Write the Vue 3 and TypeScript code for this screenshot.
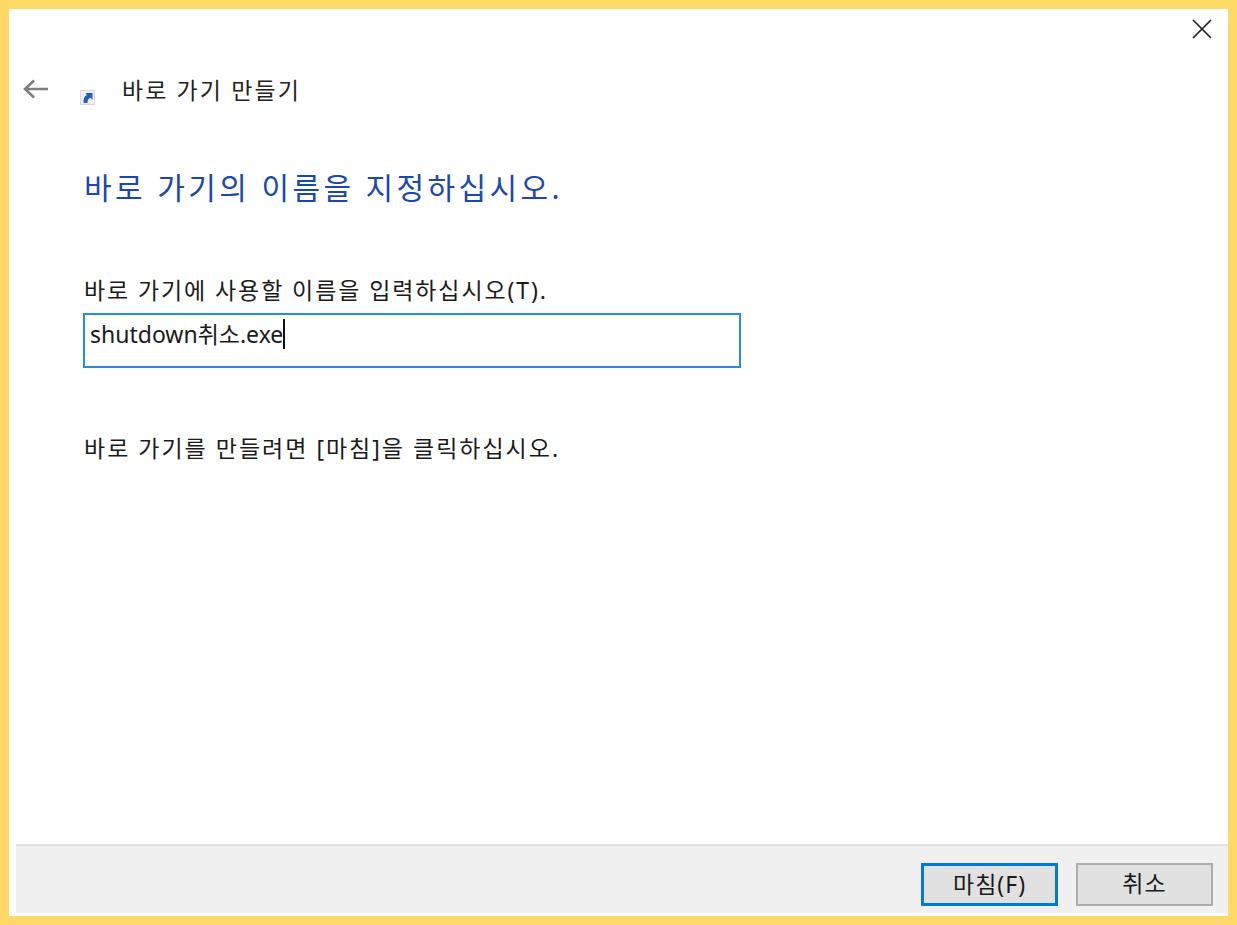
<script setup lang="ts">
const title = '바로 가기 만들기'
const heading = '바로 가기의 이름을 지정하십시오.'
const nameLabel = '바로 가기에 사용할 이름을 입력하십시오(T).'
const fileName = 'shutdown취소.exe'
const hint = '바로 가기를 만들려면 [마침]을 클릭하십시오.'
</script>

<template>
  <div class="frame">
    <div class="dialog">
      <div class="close-row">
        <svg class="close" width="20" height="20" viewBox="0 0 20 20">
          <path d="M1 1 L19 19 M19 1 L1 19" stroke="#222" stroke-width="1.7" fill="none" />
        </svg>
      </div>

      <div class="title-row">
        <svg class="back" width="26" height="20" viewBox="0 0 26 20">
          <path d="M25 10 H2 M11 1.5 L2 10 L11 18.5" stroke="#7d7d7d" stroke-width="2.6" fill="none" />
        </svg>
        <svg class="shortcut" width="15" height="15" viewBox="0 0 15 15">
          <rect x="0.5" y="0.5" width="14" height="14" fill="#eef0f4" stroke="#d8d8dc" />
          <path d="M3.5 13 C3.5 8 4.5 6 7 5.2 L5.5 3 H12.5 V10 L10.5 7.8 C8.5 8.5 7.5 10 7.5 13 Z" fill="#2160b8" />
        </svg>
        <span class="title">{{ title }}</span>
      </div>

      <main class="content">
        <h1 class="heading">{{ heading }}</h1>
        <label class="label">{{ nameLabel }}</label>
        <div class="input">
          <span>{{ fileName }}</span><i class="caret" />
        </div>
        <p class="hint">{{ hint }}</p>
      </main>

      <footer class="footer">
        <button class="btn primary">마침(F)</button>
        <button class="btn">취소</button>
      </footer>
    </div>
  </div>
</template>

<style>
html,
body {
  margin: 0;
  background: #ffd966;
}
</style>

<style scoped>
.frame {
  box-sizing: border-box;
  width: 1237px;
  height: 925px;
  padding: 9px;
  background: #ffd966;
  font-family: 'Noto Sans', 'Noto Sans CJK KR', sans-serif;
  color: #1a1a1a;
}

.dialog {
  box-sizing: border-box;
  height: 907px;
  background: #fff;
  display: flex;
  flex-direction: column;
  padding: 0 0 3px 7px;
}

.close-row {
  height: 30px;
  display: flex;
  justify-content: flex-end;
  align-items: flex-end;
  padding-right: 16px;
}

.title-row {
  display: flex;
  align-items: center;
  height: 40px;
  margin: 30px 0 0 7px;
}

.shortcut {
  margin: 16px 0 0 31px;
}

.title {
  margin-left: 27px;
  font-size: 23px;
  letter-spacing: 2.1px;
  color: #222;
}

.content {
  flex: 1;
  padding-left: 68px;
}

.heading {
  margin: 57px 0 0;
  font-size: 30px;
  font-weight: 400;
  line-height: 44px;
  color: #1a47b0;
  letter-spacing: 3.4px;
}

.label {
  display: block;
  margin-top: 65px;
  font-size: 23px;
  letter-spacing: 1.9px;
  line-height: 30px;
}

.input {
  box-sizing: border-box;
  width: 658px;
  height: 55px;
  margin: 8px 0 0 -1px;
  border: 2px solid #2a8ce0;
  padding: 3px 0 0 5px;
  font-size: 23px;
  line-height: 32px;
  display: flex;
  align-items: flex-start;
}

.caret {
  display: block;
  width: 2px;
  height: 30px;
  margin-top: 1px;
  background: #111;
}

.hint {
  margin: 65px 0 0;
  font-size: 23px;
  letter-spacing: 2px;
  line-height: 30px;
}

.footer {
  height: 69px;
  box-sizing: border-box;
  border-top: 2px solid #e3e3e3;
  background: #f0f0f0;
  display: flex;
  justify-content: flex-end;
  align-items: flex-start;
  gap: 18px;
  padding: 17px 15px 0 0;
}

.btn {
  box-sizing: border-box;
  width: 137px;
  height: 43px;
  border: 2px solid #adadad;
  background: #e1e1e1;
  font-family: inherit;
  font-size: 23px;
  letter-spacing: 1px;
  color: #1a1a1a;
  padding: 0 0 6px;
}

.btn.primary {
  border: 3px solid #0078d7;
}
</style>
